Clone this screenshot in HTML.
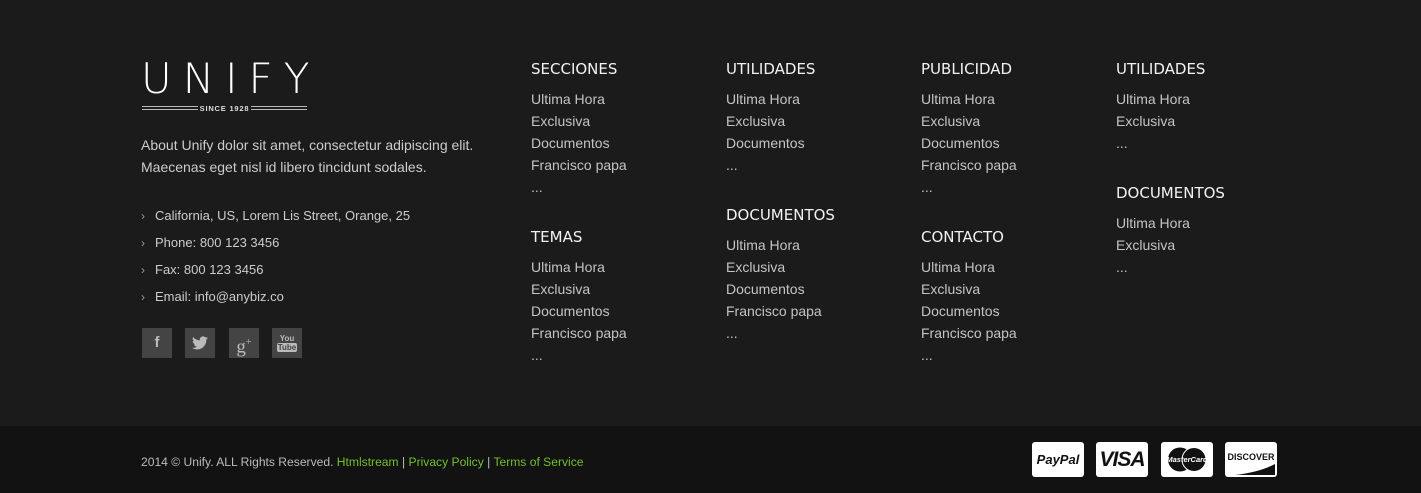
<!DOCTYPE html>
<html><head><style>
*{margin:0;padding:0;box-sizing:border-box}
body{width:1421px;height:493px;background:#1b1b1b;font-family:"Liberation Sans",Arial,sans-serif;position:relative;overflow:hidden;color:#ccc}
.a{position:absolute}
.logo{left:141px;top:56px;color:#fff;font-size:42px;letter-spacing:11px;line-height:46px;font-family:"DejaVu Sans","Liberation Sans",sans-serif;font-weight:200}
.since{left:141px;top:103px;width:167px;height:10px}
.about{left:141px;top:134px;font-size:14px;line-height:22px;color:#ccc}
.ct{left:141px;font-size:13px;color:#ccc}
.ct span{color:#999;margin-right:10px;font-size:12px}
.soc{top:328px;width:30px;height:30px;background:#444;color:#bbb;text-align:center;line-height:30px;font-size:15px;font-weight:bold}
.col{font-size:14px;line-height:22px;color:#c4c4c4}
.col h4{font-weight:normal;color:#f2f2f2;line-height:20px;margin-bottom:10px;font-family:"DejaVu Sans","Liberation Sans",sans-serif;font-size:15px;position:relative;top:1px}
.col .g{height:28px}
.bar{left:0;top:426px;width:1421px;height:67px;background:#121212}
.copy{left:141px;top:455px;font-size:12.1px;color:#bbb}
.copy b{font-weight:normal;color:#72c02c}
.card{top:442px;width:52px;height:35px;background:#fff;border-radius:3px;color:#111;text-align:center;font-weight:bold;line-height:35px}
</style></head><body>
<div class="a logo">UNIFY</div>
<svg class="a since" viewBox="0 0 167 10"><g stroke="#bbb" stroke-width="1"><line x1="1" y1="3.5" x2="57" y2="3.5"/><line x1="1" y1="6.5" x2="57" y2="6.5"/><line x1="110" y1="3.5" x2="166" y2="3.5"/><line x1="110" y1="6.5" x2="166" y2="6.5"/></g><text x="83.5" y="8" text-anchor="middle" fill="#ddd" font-size="7.5" font-weight="bold" font-family="Liberation Sans" letter-spacing="0.8">SINCE 1928</text></svg>
<div class="a about">About Unify dolor sit amet, consectetur adipiscing elit.<br>Maecenas eget nisl id libero tincidunt sodales.</div>
<div class="a ct" style="top:208px"><span>›</span>California, US, Lorem Lis Street, Orange, 25</div>
<div class="a ct" style="top:235px"><span>›</span>Phone: 800 123 3456</div>
<div class="a ct" style="top:262px"><span>›</span>Fax: 800 123 3456</div>
<div class="a ct" style="top:289px"><span>›</span>Email: info@anybiz.co</div>
<div class="a soc" style="left:142px">f</div>
<div class="a soc" style="left:185px"><svg width="16" height="14" viewBox="0 0 16 14" style="margin-top:8px"><path d="M16 2c-.6.3-1.2.4-1.9.5.7-.4 1.2-1 1.4-1.8-.6.4-1.3.6-2.1.8C12.8.8 12 .4 11 .4 9.2.4 7.7 1.900 7.7 3.7c0 .3 0 .5.1.7C5.1 4.3 2.7 3 1.1 1 .8 1.5.7 2.1.7 2.7c0 1.1.6 2.1 1.5 2.7-.5 0-1-.2-1.5-.4 0 1.6 1.1 2.9 2.6 3.2-.5.1-1 .2-1.5.1.4 1.3 1.6 2.3 3.1 2.3C3.8 11.5 2.1 12 .1 11.9 1.5 12.9 3.3 13.4 5 13.4c6 0 9.3-5 9.3-9.3v-.4C15 3.2 15.5 2.6 16 2z" fill="#bbb"/></svg></div>
<div class="a soc" style="left:229px;font-family:'Liberation Serif',serif;font-weight:normal;font-size:19px">g<sup style="font-size:10px">+</sup></div>
<div class="a soc" style="left:272px;font-size:8px;line-height:9px;padding-top:6px">You<br><span style="background:#bbb;color:#444;border-radius:2px;padding:0 1px">Tube</span></div>

<div class="a col" style="left:531px;top:58px"><h4>SECCIONES</h4>Ultima Hora<br>Exclusiva<br>Documentos<br>Francisco papa<br>...<div class="g"></div><h4>TEMAS</h4>Ultima Hora<br>Exclusiva<br>Documentos<br>Francisco papa<br>...</div>
<div class="a col" style="left:726px;top:58px"><h4>UTILIDADES</h4>Ultima Hora<br>Exclusiva<br>Documentos<br>...<div class="g"></div><h4>DOCUMENTOS</h4>Ultima Hora<br>Exclusiva<br>Documentos<br>Francisco papa<br>...</div>
<div class="a col" style="left:921px;top:58px"><h4>PUBLICIDAD</h4>Ultima Hora<br>Exclusiva<br>Documentos<br>Francisco papa<br>...<div class="g"></div><h4>CONTACTO</h4>Ultima Hora<br>Exclusiva<br>Documentos<br>Francisco papa<br>...</div>
<div class="a col" style="left:1116px;top:58px"><h4>UTILIDADES</h4>Ultima Hora<br>Exclusiva<br>...<div class="g"></div><h4>DOCUMENTOS</h4>Ultima Hora<br>Exclusiva<br>...</div>

<div class="a bar"></div>
<div class="a copy">2014 © Unify. ALL Rights Reserved. <b>Htmlstream</b> | <b>Privacy Policy</b> | <b>Terms of Service</b></div>
<div class="a card" style="left:1032px;font-size:13px;font-style:italic">PayPal</div>
<div class="a card" style="left:1096px;font-size:21px;font-style:italic;letter-spacing:-1px">VISA</div>
<div class="a card" style="left:1161px"><svg width="52" height="35" viewBox="0 0 52 35"><circle cx="19" cy="17.5" r="12" fill="#111"/><circle cx="33" cy="17.5" r="12" fill="#111" stroke="#fff" stroke-width="1"/><text x="26" y="20" text-anchor="middle" fill="#fff" font-size="7.5" font-style="italic" font-weight="bold" font-family="Liberation Sans">MasterCard</text></svg></div>
<div class="a card" style="left:1225px;font-size:9px;line-height:30px">DISCOVER<svg class="a" style="left:10px;top:22px" width="40" height="11"><path d="M0 11 Q25 8 40 0 V11Z" fill="#111"/></svg></div>
</body></html>
